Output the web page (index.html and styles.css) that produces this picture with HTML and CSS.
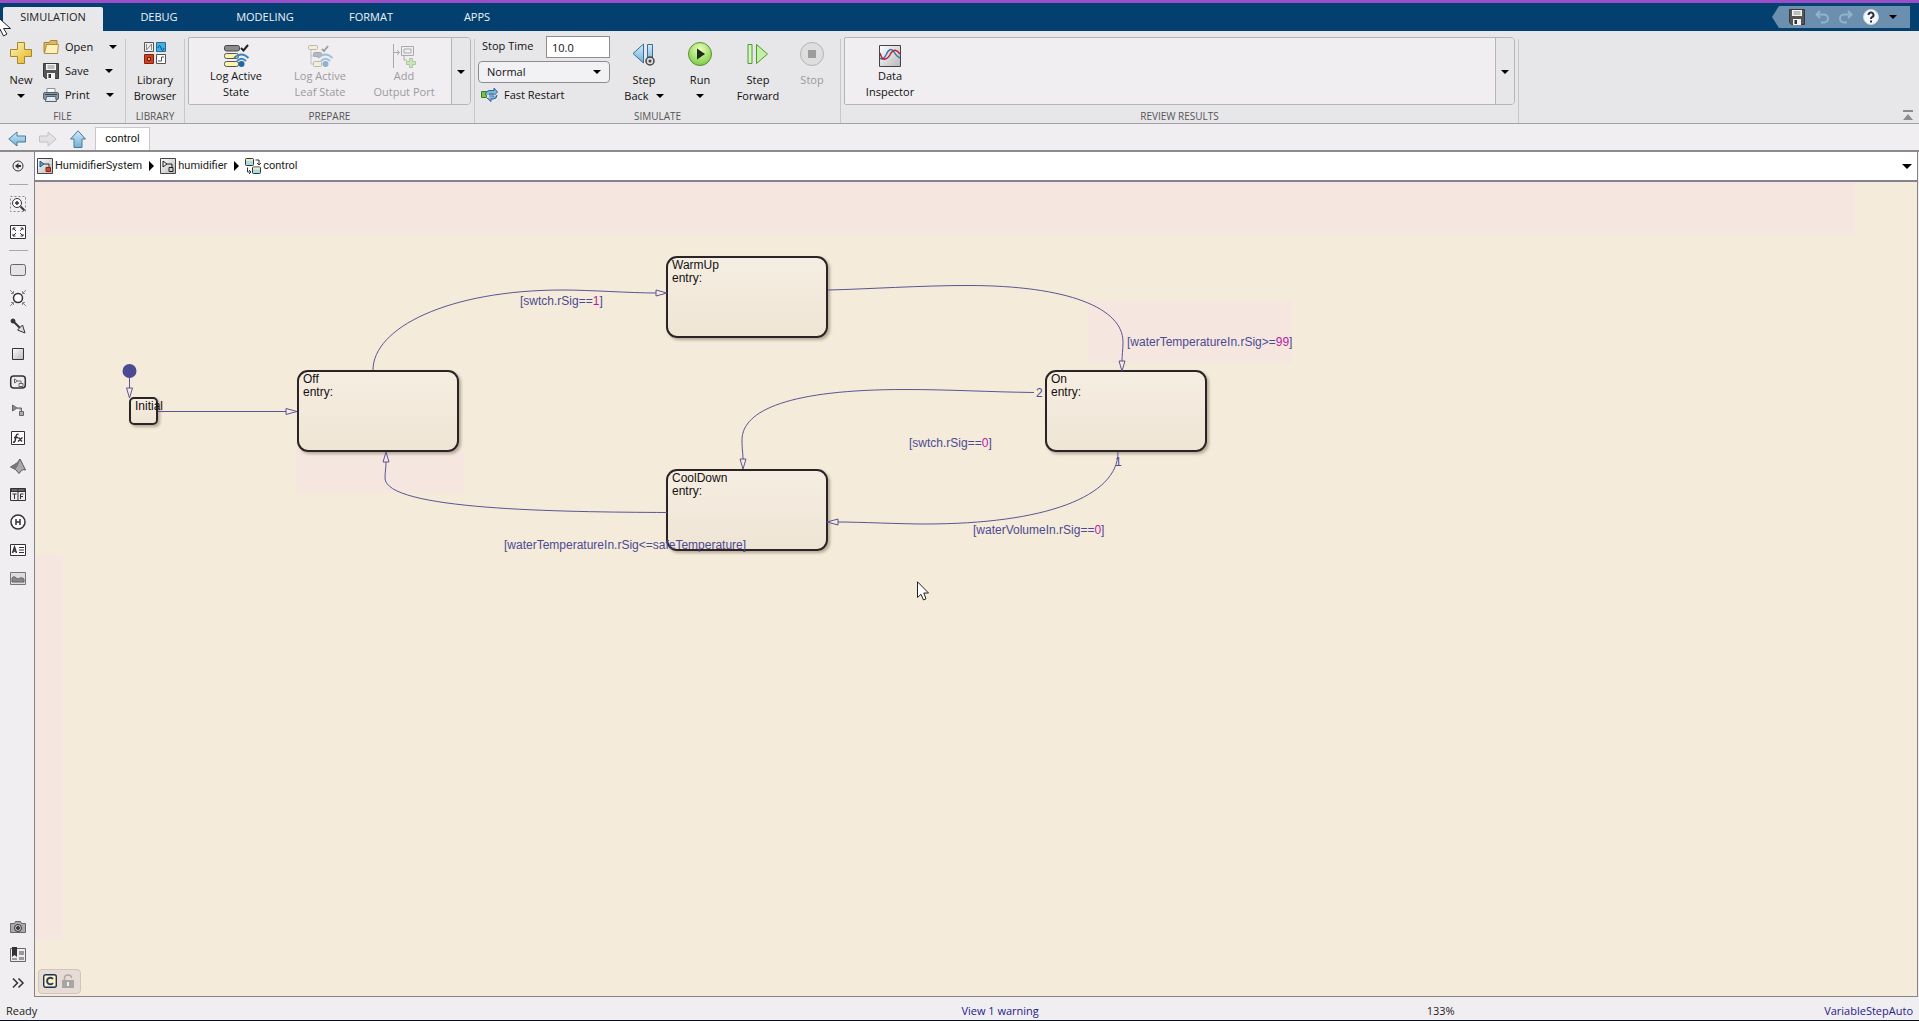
FILE: index.html
```html
<!DOCTYPE html>
<html lang="en">
<head>
<meta charset="utf-8">
<title>HumidifierSystem - control</title>
<link rel="stylesheet" href="styles.css">
</head>
<body>
<svg class="defs" aria-hidden="true">
  <defs>
    <linearGradient id="gold" x1="0" y1="0" x2="1" y2="1"><stop offset="0" stop-color="#fff7b8"/><stop offset="1" stop-color="#e0b21c"/></linearGradient>
    <linearGradient id="sky" x1="0" y1="0" x2="0" y2="1"><stop offset="0" stop-color="#d2ecfb"/><stop offset="1" stop-color="#6faed6"/></linearGradient>
    <linearGradient id="grey" x1="0" y1="0" x2="1" y2="1"><stop offset="0" stop-color="#fff"/><stop offset="1" stop-color="#b9b9b9"/></linearGradient>
    <radialGradient id="green" cx=".5" cy=".3" r=".8"><stop offset="0" stop-color="#eaffc0"/><stop offset="1" stop-color="#6cc531"/></radialGradient>
    <symbol id="floppy" viewBox="0 0 16 16"><path d="M.5.5h15v15H2.500l-2-2z" fill="#555" stroke="#3a3a3a"/><path d="M3 1h10v6H3z" fill="#f4f4f4"/><path d="M4.500 3h7M4.500 5h7" stroke="#888"/><path d="M4 10h8v6H4z" fill="#f4f4f4"/><path d="M5.500 11H8v4H5.500z" fill="#333"/></symbol>
  </defs>
</svg>

<header class="titlebar">
  <nav class="tabs">
    <button class="tab tab-active">SIMULATION</button>
    <button class="tab">DEBUG</button>
    <button class="tab">MODELING</button>
    <button class="tab">FORMAT</button>
    <button class="tab">APPS</button>
  </nav>
  <div class="quick">
    <button aria-label="Save"><svg width="16" height="16"><use href="#floppy"/></svg></button>
    <button aria-label="Undo"><svg width="14" height="14" fill="none" stroke="#93b3cb" stroke-width="2"><path d="M5 1 1.500 4.500 5 8M2 4.500h7a4 4 0 0 1 0 8H6"/></svg></button>
    <button aria-label="Redo"><svg width="14" height="14" fill="none" stroke="#93b3cb" stroke-width="2"><path d="m9 1 3.500 3.500L9 8m3-3.500H5a4 4 0 0 0 0 8h3"/></svg></button>
    <button aria-label="Help"><svg width="16" height="16"><circle cx="8" cy="8" r="7.500" fill="#f6f8fb" stroke="#cfd6e0"/><path d="M5.500 6a2.500 2.500 0 1 1 3.500 2.200q-1 .5-1 1.800" fill="none" stroke="#26304a" stroke-width="2"/><path d="M7 11.500h2v2H7z" fill="#26304a"/></svg></button>
    <button aria-label="More"><span class="caret"></span></button>
  </div>
</header>

<section class="ribbon">
  <div class="group group-file">
    <div class="group-body">
      <button class="big">
        <svg width="22" height="22"><path d="M7.500.5h7v7h7v7h-7v7h-7v-7h-7v-7h7z" fill="url(#gold)" stroke="#a8842a"/></svg>
        <span>New</span><span class="line"><i class="caret"></i></span>
      </button>
      <div class="rows">
        <button class="row">
          <svg width="16" height="14"><path d="M1 12.500V2.500h5l1.500-2H14v12z" fill="#e0b95c" stroke="#a8843a"/><path d="M3.500 4.500h12l-1 9h-13z" fill="#fff0b8" stroke="#b08f45"/></svg>
          <span>Open</span><i class="caret"></i>
        </button>
        <button class="row"><svg width="16" height="16"><use href="#floppy"/></svg><span>Save</span><i class="caret"></i></button>
        <button class="row">
          <svg width="16" height="14"><path d="M4 .5h8V5H4z" fill="#fff" stroke="#8894a5"/><rect x=".5" y="4.500" width="15" height="7" rx="1.500" fill="#8a96a3" stroke="#56606c"/><path d="M2 6.500h12" stroke="#3c4652"/><path d="M3.500 8.500h9l1 5h-11z" fill="#dcebf8" stroke="#56606c"/></svg>
          <span>Print</span><i class="caret"></i>
        </button>
      </div>
    </div>
    <h2>FILE</h2>
  </div>

  <div class="group group-library">
    <div class="group-body">
      <button class="big">
        <svg width="22" height="22" fill="none"><path d="M.5.500h9v9h-9z" fill="#eee" stroke="#555"/><path d="M2.500 2v6l5-6v6" stroke="#888"/><path d="M12.500.5h9v9h-9z" fill="#45aee0" stroke="#1b6f9c"/><path d="M14 6q1.500-5 3 0t3 0" stroke="#0d4d73"/><path d="M.5 12.500h9v9h-9z" fill="#cf4020" stroke="#86230f"/><path d="M3.500 15.500h3v3h-3z" fill="#f0a08a" stroke="#6c1a08"/><path d="M12.500 12.500h9v9h-9z" fill="#fff" stroke="#555"/><path d="M14 19h3.500v-4H20" stroke="#555"/></svg>
        <span>Library</span><span>Browser</span>
      </button>
    </div>
    <h2>LIBRARY</h2>
  </div>

  <div class="group group-prepare">
    <div class="group-body">
      <div class="gallery">
        <button class="item">
          <svg width="25" height="24"><rect x=".5" y="1.500" width="15" height="5.500" rx="2" fill="#8b8b8b" stroke="#444"/><rect x=".5" y="9.500" width="14" height="5" rx="2" fill="#fcf2ae" stroke="#555"/><rect x=".5" y="17.500" width="14" height="5" rx="2" fill="#fcf2ae" stroke="#555"/><path d="m17 4 2.500 2.500L24 1" fill="none" stroke="#222" stroke-width="2"/><path d="M10 14q7.500-7 14.500 0M13 17q4.500-4.500 9 0" fill="none" stroke="#3f86bd" stroke-width="2"/><circle cx="17.500" cy="20" r="3" fill="#1c67a8"/></svg>
          <span>Log Active</span><span>State</span>
        </button>
        <button class="item" disabled>
          <svg width="25" height="24"><path d="M3 5v15M3 12h3M3 20h3" stroke="#888"/><rect x=".5" y="1.500" width="9" height="4" rx="1" fill="#fcf2ae" stroke="#777"/><rect x="5.500" y="8.500" width="8" height="4" rx="1" fill="#777" stroke="#555"/><rect x="5.500" y="17.500" width="8" height="5" rx="1" fill="#fcf2ae" stroke="#777"/><path d="m14 5 2 2 4-5" fill="none" stroke="#444" stroke-width="2"/><path d="M10 14q7.500-7 14.500 0M13 17q4.500-4.500 9 0" fill="none" stroke="#3f86bd" stroke-width="2"/><circle cx="17.500" cy="20" r="3" fill="#1c67a8"/></svg>
          <span>Log Active</span><span>Leaf State</span>
        </button>
        <button class="item" disabled>
          <svg width="24" height="24" fill="none" stroke="#555"><path d="M1.500 0v24M1 8.500h6M5 6l2.500 2.500L5 11M9.500 2.500h12v9h-12zM12 5h7v4h-7zM12 11v5h3"/><path d="M17.500 14.500h3v3h3v3h-3v3h-3v-3h-3v-3h3z" fill="#a6dd86" stroke="#4f9c35"/></svg>
          <span>Add</span><span>Output Port</span>
        </button>
        <button class="gallery-more" aria-label="Show more"><i class="caret"></i></button>
      </div>
    </div>
    <h2>PREPARE</h2>
  </div>

  <div class="group group-simulate">
    <div class="group-body">
      <div class="sim-form">
        <div class="stop-time"><label for="stop">Stop Time</label><input id="stop" type="text" value="10.0"></div>
        <div class="select"><select aria-label="Simulation mode"><option>Normal</option></select></div>
        <button class="row">
          <svg width="17" height="14"><path d="M.5 3.500h5v6h-5z" fill="#7cc04f" stroke="#3d7a22"/><path d="M4.500 7a4.500 4 0 0 1 4.500-4.500h4V0l3.500 4-3 3M16 7a4 4 0 0 1-4 4h-2v2.500L6 10" fill="#7fb4dc" stroke="#2f618c"/><path d="M8 6h5M8 8h5" stroke="#2f618c"/></svg>
          <span>Fast Restart</span>
        </button>
      </div>
      <button class="big big-60">
        <svg width="24" height="24"><path d="M11.500 2v19L1 11.500z" fill="url(#sky)" stroke="#3d6d94"/><path d="M15.500 2.500h5v18h-5z" fill="url(#sky)" stroke="#3d6d94"/><circle cx="18" cy="19" r="4" fill="#ddd" stroke="#444" stroke-width="1.500"/><circle cx="18" cy="19" r="1.500" fill="#444"/></svg>
        <span>Step</span><span class="line">Back <i class="caret"></i></span>
      </button>
      <button class="big big-52">
        <svg width="24" height="24"><circle cx="12" cy="12" r="11.500" fill="url(#green)" stroke="#5b8f3a"/><path d="M9 6.500v11l8-5.500z" fill="#1e2a18"/></svg>
        <span>Run</span><span class="line"><i class="caret"></i></span>
      </button>
      <button class="big big-64">
        <svg width="22" height="24"><path d="M1 2.500h4v19H1z" fill="#d5f5be" stroke="#4d9a35"/><path d="M9.500 2.500v19l11-9.500z" fill="#c3efa6" stroke="#4d9a35"/></svg>
        <span>Step</span><span>Forward</span>
      </button>
      <button class="big big-44" disabled>
        <svg width="24" height="24"><circle cx="12" cy="12" r="11.500" fill="#d6d6d6" stroke="#777"/><path d="M8 8h8v8H8z" fill="#444"/></svg>
        <span>Stop</span>
      </button>
    </div>
    <h2>SIMULATE</h2>
  </div>

  <div class="group group-review">
    <div class="group-body">
      <div class="gallery">
        <button class="item">
          <svg width="22" height="22" viewBox="0 0 22 22" fill="none"><path d="M.5.5h21v21H.5z" fill="url(#grey)" stroke="#444"/><path d="M1 13q3 3 6-3 4-9 8-3 2 4 6 6" stroke="#3b78ad" stroke-width="1.500"/><path d="M1 8q2 7 5 6 3 0 6-6 4-6 9 1" stroke="#b5243a" stroke-width="1.500"/></svg>
          <span>Data</span><span>Inspector</span>
        </button>
        <button class="gallery-more" aria-label="Show more"><i class="caret"></i></button>
      </div>
    </div>
    <h2>REVIEW RESULTS</h2>
  </div>
  <button class="collapse" aria-label="Collapse toolstrip"><svg width="10" height="10" fill="#8c8c8c"><path d="M0 0h10v2H0zM5 4l5 6H0z"/></svg></button>
</section>

<nav class="docbar">
  <button aria-label="Back"><svg width="18" height="16"><path d="M.8 8 9 1v4h8.500v6H9v4z" fill="url(#sky)" stroke="#4d7896"/></svg></button>
  <button aria-label="Forward"><svg width="18" height="16"><path d="M17.200 8 9 1v4H.5v6H9v4z" fill="#e2e2e2" stroke="#c2c2c2"/></svg></button>
  <button aria-label="Up"><svg width="16" height="18"><path d="M8 .8 15.500 9H12v8.500H4V9H.5z" fill="url(#sky)" stroke="#4d7896"/></svg></button>
  <button class="doctab">control</button>
</nav>

<main class="work">
  <aside class="palette">
    <button aria-label="Hide browser"><svg viewBox="0 0 16 16"><circle cx="8" cy="8" r="5"/><path d="M11 8H6" stroke-width="2"/><path d="M8.500 5v6L5 8z" fill="#333" stroke="none"/></svg></button>
    <hr>
    <button aria-label="Zoom"><svg viewBox="0 0 16 16"><path d="M.5.500h15v15H.5z" stroke="#888" stroke-dasharray="2 2"/><circle cx="7" cy="7" r="4.500" fill="#fff"/><path d="M7 5v4M5 7h4" stroke-width="1.500"/><path d="m10.500 10.500 4 4" stroke-width="2"/></svg></button>
    <button aria-label="Fit to view"><svg viewBox="0 0 16 16"><path d="M.5 1.500h15v13H.5z" fill="#fff"/><path d="M3 6V4h2.500M3 4l3 3M13 6V4h-2.500M13 4l-3 3M3 10v2h2.500M3 12l3-3M13 10v2h-2.500M13 12l-3-3"/></svg></button>
    <hr>
    <button aria-label="State"><svg viewBox="0 0 16 16"><rect x=".5" y="2.500" width="15" height="11" rx="2" fill="#e4e4e4" stroke="#666"/></svg></button>
    <button aria-label="Junction"><svg viewBox="0 0 16 16"><circle cx="8" cy="8" r="4.500" fill="#fff" stroke-width="1.500"/><path d="M0 0l3.500 3.500M3.500 1v2.500H1M16 0l-3.500 3.500M12.500 1v2.500H15M0 16l3.500-3.500M1 12.500h2.500V15M16 16l-3.500-3.500M15 12.500h-2.500V15" stroke="#888"/></svg></button>
    <button aria-label="Default transition"><svg viewBox="0 0 16 16"><circle cx="3" cy="3" r="2" fill="#333"/><path d="m3 3 7 7" stroke-width="2"/><path d="m7.500 12 5-5 2.500 8z" fill="#ddd"/></svg></button>
    <button aria-label="Box"><svg viewBox="0 0 16 16"><path d="M2.500 2.500h11v11h-11z" fill="url(#grey)"/></svg></button>
    <button aria-label="Simulink state"><svg viewBox="0 0 16 16"><rect x=".7" y="2" width="14.600" height="12" rx="3" fill="#eee" stroke-width="1.500"/><path d="M4.500 5v4l3-2zM7.500 7H11v2M9 9.500h4v3H9z" stroke="#666"/></svg></button>
    <button aria-label="Simulink function"><svg viewBox="0 0 16 16"><path d="M2.500 3v6L7 6z" fill="#888" stroke="#666"/><path d="M7 6h4.500v3M9.500 9.500h4v4h-4z" fill="#aaa" stroke="#666"/></svg></button>
    <button aria-label="Graphical function"><svg viewBox="0 0 16 16"><path d="M1.500 1.500h13v13h-13z" fill="#fff"/><path d="M8.500 4.500q-2-1-2.500 2L5 11q-.5 1.500-2 1M4 7.500h4M8.500 7.500l3.500 4M12.500 7.500l-4.500 4" stroke-width="1.500"/></svg></button>
    <button aria-label="MATLAB function"><svg viewBox="0 0 16 16"><path d="m.5 9 4-2.500q3-1 5.500-5.500 2.500 5 5.500 11-2.500-1-4 .500L9 15.500Q6.500 11 .5 9z" fill="#aaa" stroke="#555"/><path d="M10 1.500Q8 9 5 11.500L.5 9l4-2.500q3-1 5.500-5z" fill="#777" stroke="none"/></svg></button>
    <button aria-label="Truth table"><svg viewBox="0 0 16 16"><path d="M.5 2.500h15v12H.5z" fill="#eee"/><path d="M1 3h14v2H1z" fill="#999"/><path d="M.5 5.500h15M8 3v11M2.500 8h4M4.500 8v5M10.500 13V8h3M10.500 10.500H13"/></svg></button>
    <button aria-label="History junction"><svg viewBox="0 0 16 16"><circle cx="8" cy="8" r="7" fill="#fff" stroke-width="1.500"/><path d="M6 5v6M10 5v6M6 8h4" stroke-width="1.500"/></svg></button>
    <button aria-label="Annotation"><svg viewBox="0 0 16 16"><path d="M.5 2.500h15v11H.5z" fill="#fff"/><path d="m2.500 11 2-6 2 6M3 9h3" stroke-width="1.500"/><path d="M9 5.500h5M9 8h5M9 10.500h5"/></svg></button>
    <button aria-label="Image"><svg viewBox="0 0 16 16"><path d="M.5 2.500h15v12H.5z" fill="#ddd" stroke="#777"/><path d="M2 12V8q2-3 4 0 2 2 4 0 2-1 4 1v3z" fill="#888" stroke="#666"/></svg></button>
    <span class="spring"></span>
    <button aria-label="Screenshot"><svg viewBox="0 0 16 16"><path d="M.5 4.500h4l1-2h5l1 2h4v9H.5z" fill="#aaa" stroke="#666"/><circle cx="8" cy="9" r="3.500" fill="#ccc"/><circle cx="8" cy="9" r="1.500" fill="#444"/></svg></button>
    <button aria-label="Model browser"><svg viewBox="0 0 16 16"><path d="M.5 1.500h15v13H.5z" fill="#eee" stroke="#666"/><path d="M9 4h5v4H9zM9 10h5v3H9zM2 11h5v2H2z" fill="#999" stroke="none"/><path d="M2 0h5v10L4.500 8 2 10z" fill="#333" stroke="none"/></svg></button>
    <button aria-label="More"><svg viewBox="0 0 16 16"><path d="m3 3.500 4.500 4.500L3 12.500M8.500 3.500 13 8l-4.500 4.500" stroke-width="1.500"/></svg></button>
  </aside>

  <div class="editor">
    <div class="crumbs">
      <a href="#"><svg width="16" height="16"><path d="M.5.5h15v15H.5z" fill="url(#grey)" stroke="#444"/><path d="M3 3v6l4-3z" fill="#4ba3d6" stroke="#1c5d86"/><path d="M7 6h5v3" fill="none" stroke="#333"/><path d="M9 9.500h4.500v4H9z" fill="#d8452b" stroke="#8a2412"/></svg>HumidifierSystem</a>
      <i class="next"></i>
      <a href="#"><svg width="16" height="16" fill="none" stroke="#222"><path d="M.5.5h15v15H.5z" fill="url(#grey)" stroke="#444"/><path d="M3 3v6l4-3zM7 6h5v3M9 9.500h4v4H9z"/></svg>humidifier</a>
      <i class="next"></i>
      <a href="#"><svg width="16" height="16" fill="none" stroke="#333"><rect x=".5" y=".5" width="8" height="7" rx="1" fill="#a8dcea"/><path d="M1 1h7v2H1z" fill="#f7ecb0" stroke="none"/><rect x="7.500" y="9" width="8" height="6.500" rx="1" fill="#a8dcea"/><path d="M8 9.500h7v2H8z" fill="#f7ecb0" stroke="none"/><path d="M10.500 2H14v5M12 5l2 2 2-2M2.500 9.500V14h3M4 12l2 2-2 2"/></svg>control</a>
      <button class="crumb-more" aria-label="Show path"><i class="caret caret-wide"></i></button>
    </div>

    <div class="canvas">
      <div class="state small" style="left:94px;top:215px"><p>Initial</p></div>
      <div class="state" style="left:262px;top:188px"><p>Off</p><p>entry:</p></div>
      <div class="state" style="left:631px;top:74px"><p>WarmUp</p><p>entry:</p></div>
      <div class="state" style="left:631px;top:287px"><p>CoolDown</p><p>entry:</p></div>
      <div class="state" style="left:1010px;top:188px"><p>On</p><p>entry:</p></div>

      <svg class="links" aria-hidden="true">
        <g transform="translate(-35 -182)">
          <circle cx="129.500" cy="371" r="7" fill="#4b4b93"/>
          <path d="M129.500 378v10m-3 0h6l-3 10z"/>
          <path d="M158 411.500h128m0-3v6l11-3z"/>
          <path d="M373 370C373 328 448 290 563 290 590 290 630 293 656 293m0-3v6l11-3z"/>
          <path d="M828 290C870 289 920 285.500 968 285.500 1068 285.500 1123 308 1123 342 1123 350 1122 355 1122 361m-3 0h6l-3 10z"/>
          <path d="M1034 392.500C990 392 950 389.500 905 389.500 790 389.500 742 410 742 440 742 450 743 453 743 459m-3 0h6l-3 10z"/>
          <path d="M1118 452C1118 497 1044 524 925 524 900 524 860 522 838 522m0-3v6l-11-3z"/>
          <path d="M667 512.500C560 512 385 510 385 478 385 472 386 468 386 462m-3 0h6l-3-10z"/>
        </g>
      </svg>

      <span class="cond" style="left:485px;top:113px">[swtch.rSig==<b>1</b>]</span>
      <span class="cond" style="left:1092px;top:154px">[waterTemperatureIn.rSig&gt;=<b>99</b>]</span>
      <span class="cond" style="left:874px;top:255px">[swtch.rSig==<b>0</b>]</span>
      <span class="cond" style="left:938px;top:342px">[waterVolumeIn.rSig==<b>0</b>]</span>
      <span class="cond" style="left:469px;top:357px">[waterTemperatureIn.rSig&lt;=safeTemperature]</span>
      <span class="cond" style="left:1001px;top:205px">2</span>
      <span class="cond" style="left:1080px;top:274px">1</span>

      <div class="badge">
        <svg width="14" height="14"><rect x=".7" y=".7" width="12.600" height="12.600" rx="2" fill="#fdf5bd" stroke="#1f3155" stroke-width="1.400"/><path d="M10 5a3.300 3.300 0 1 0 0 4" fill="none" stroke="#2a3e6e" stroke-width="2"/></svg>
        <svg width="12" height="14"><path d="M2.500 6V4a3.500 3 0 0 1 7 0" fill="none" stroke="#aaa" stroke-width="1.500"/><path d="M0 6h12v8H0z" fill="#a9a5a3"/><path d="M5 8h2v4H5z" fill="#eee"/></svg>
      </div>
      <svg class="pointer pointer-canvas" width="12" height="20" viewBox="0 0 12 20" aria-hidden="true"><path d="M.5.800v15.700l3.500-3.200L6.500 19l2.500-1.200L6.800 12h4.700z" fill="#fff" stroke="#222"/></svg>
    </div>
  </div>
</main>

<footer class="status">
  <span>Ready</span>
  <a href="#">View 1 warning</a>
  <span>133%</span>
  <a href="#">VariableStepAuto</a>
</footer>
<svg class="pointer pointer-page" width="12" height="22" viewBox="0 0 12 22" aria-hidden="true"><path d="M-4.500-1v17L0 13l3.500 7L7 18l-3.500-5.500H10.500z" fill="#fff" stroke="#222"/></svg>
</body>
</html>
```
FILE: styles.css
```css
* { box-sizing: border-box; }

body {
  margin: 0;
  min-height: 100vh;
  display: flex;
  flex-direction: column;
  background: #f0eef1;
  border-top: 3px solid #9a4fc8;
  border-bottom: 1px solid #0a0f1c;
  color: #111;
  font: 12px/16px "Open Sans", "Noto Sans", sans-serif;
}

button {
  margin: 0;
  padding: 0;
  border: 0;
  background: none;
  color: inherit;
  font: inherit;
}

a { color: inherit; text-decoration: none; }
svg { display: block; flex: none; overflow: visible; }
.defs { position: absolute; width: 0; height: 0; }

.caret {
  display: inline-block;
  border: 4px solid transparent;
  border-top-color: #000;
  border-bottom: 0;
}
.caret-wide { border-width: 5px 5px 0; }

/* Title bar */
.titlebar {
  display: flex;
  justify-content: space-between;
  align-items: flex-end;
  height: 28px;
  background: #04406f;
}
.tabs { display: flex; gap: 6px; padding-left: 3px; }
.tab {
  width: 100px;
  height: 24px;
  padding-bottom: 4px;
  color: #eef3f8;
  font-size: 11px;
}
.tab-active { background: #e8e7e9; color: #222; border-radius: 2px 2px 0 0; }
.quick {
  display: flex;
  align-items: center;
  gap: 10px;
  height: 22px;
  margin: 0 9px 3px 0;
  padding: 0 13px 0 17px;
  background: #6b8fae;
  clip-path: polygon(0 50%, 7px 0, 100% 0, 100% 100%, 7px 100%);
}
.quick button { display: flex; }

/* Ribbon */
.ribbon {
  display: flex;
  height: 93px;
  background: #e7e6e8;
  border-bottom: 1px solid #a2a0a3;
}
.group {
  display: flex;
  flex-direction: column;
  padding-right: 1px;
  background: linear-gradient(#c8c6c9, #c8c6c9) right bottom / 1px calc(100% - 8px) no-repeat;
}
.group-file { width: 126px; }
.group-library { width: 59px; }
.group-prepare { width: 290px; }
.group-simulate { width: 366px; }
.group-review { width: 678px; }
.group-body { display: flex; flex: 1; align-items: flex-start; }
.group h2 {
  margin: 0;
  height: 15px;
  line-height: 17px;
  color: #555;
  font-size: 10px;
  font-weight: 400;
  text-align: center;
}
.big, .item, .row { font-size: 11px; }
.big {
  display: flex;
  flex-direction: column;
  align-items: center;
  padding-top: 11px;
  white-space: nowrap;
}
.big svg { height: 24px; margin-bottom: 6px; }
.big-60 { width: 60px; }
.big-52 { width: 52px; }
.big-64 { width: 64px; }
.big-44 { width: 44px; }
.line { display: flex; align-items: center; gap: 7px; height: 16px; }
.group-file .big { width: 42px; }
.group-library .big { width: 58px; }
.rows { display: flex; flex-direction: column; padding: 4px 0 0 1px; }
.row { display: flex; align-items: center; height: 24px; gap: 6px; }
.row .caret { margin-left: 10px; }
button:disabled { color: #9c9a9d; }
button:disabled svg { opacity: .45; }

.gallery {
  display: flex;
  flex: 1;
  height: 68px;
  margin: 6px 3px 0;
  padding-left: 5px;
  background: #f0eef1;
  border: 1px solid #b6b4b7;
  border-radius: 2px 4px 4px 2px;
}
.item {
  display: flex;
  flex-direction: column;
  align-items: center;
  width: 84px;
  padding-top: 6px;
}
.item svg { height: 24px; }
.gallery-more {
  width: 19px;
  margin-left: auto;
  background: #e7e6e8;
  border-left: 1px solid #b6b4b7;
  border-radius: 0 3px 3px 0;
}
.gallery-more .caret { vertical-align: middle; }
.group-review .gallery { padding-left: 3px; }

.sim-form { width: 135px; padding: 5px 0 0 3px; margin-right: 4px; font-size: 11px; }
.stop-time { display: flex; justify-content: space-between; padding-left: 4px; line-height: 20px; }
.stop-time input {
  width: 64px;
  height: 22px;
  padding: 0 5px;
  border: 1px solid #8e8c8f;
  background: #fff;
  color: #111;
  font: inherit;
}
.select { position: relative; margin-top: 3px; }
.select::after {
  content: "";
  position: absolute;
  right: 9px;
  top: 9px;
  border: 4px solid transparent;
  border-top-color: #000;
  border-bottom: 0;
}
.select select {
  appearance: none;
  display: block;
  width: 100%;
  height: 22px;
  padding: 0 8px;
  border: 1px solid #8e8c8f;
  border-radius: 4px;
  background: #f2f1f3;
  color: #111;
  font: inherit;
}
.sim-form .row { padding-left: 3px; }
.collapse { margin: auto 6px 3px auto; }

/* Document bar */
.docbar {
  display: flex;
  align-items: center;
  height: 28px;
  padding: 3px 0 0 8px;
  border-bottom: 2px solid #8b8b8d;
}
.docbar button { margin-right: 13px; }
.docbar .doctab {
  align-self: stretch;
  width: 55px;
  margin-left: -4px;
  background: #fff;
  border: 1px solid #c9c7ca;
  border-bottom: 0;
  font: 11px/16px Roboto, sans-serif;
}

/* Work area */
.work { display: flex; flex: 1; }
.palette {
  display: flex;
  flex-direction: column;
  width: 34px;
  padding-left: 2px;
}
.palette button { display: grid; place-items: center; height: 28px; }
.palette svg { width: 16px; height: 16px; fill: none; stroke: #333; }
.palette hr { width: 19px; margin: 4px auto 5px; border: 0; border-top: 1px solid #a9a7aa; }
.spring { flex: 1; }

.editor {
  display: flex;
  flex: 1;
  flex-direction: column;
  margin-right: 1px;
  border: 1px solid #848385;
  border-top: 0;
}
.crumbs {
  display: flex;
  align-items: center;
  height: 30px;
  padding: 0 5px 0 2px;
  background: #fff;
  border-bottom: 2px solid #84828f;
  color: #222;
  font: 11px/16px Roboto, sans-serif;
}
.crumbs a { display: flex; align-items: center; gap: 2px; }
.next {
  margin: 0 6px 0 7px;
  border: 5px solid transparent;
  border-left-color: #000;
  border-right: 0;
}
.crumb-more { margin-left: auto; }

/* Chart canvas */
.canvas {
  position: relative;
  flex: 1;
  overflow: hidden;
  font: 12px/13px "Liberation Sans", Arial, sans-serif;
  background:
    linear-gradient(#f5e7df, #f5e7df) 0 0 / 1820px 53px no-repeat,
    linear-gradient(#f5e7df, #f5e7df) 0 373px / 28px 385px no-repeat,
    linear-gradient(#f5e7df, #f5e7df) 261px 268px / 168px 43px no-repeat,
    linear-gradient(#f5e7df, #f5e7df) 1053px 118px / 204px 63px no-repeat,
    #f4ebda;
}
.state {
  position: absolute;
  width: 162px;
  height: 82px;
  padding: 1px 4px;
  border: 2px solid #2a2426;
  border-radius: 11px;
  background: linear-gradient(#f6ede2, #efe5d5);
  box-shadow: 2px 2px 3px rgba(90, 70, 50, .4);
}
.state p { margin: 0; white-space: nowrap; }
.small { width: 29px; height: 28px; border-radius: 5px; }
.links { position: absolute; inset: 0; width: 100%; height: 100%; fill: none; stroke: #5a5595; }
.links circle { stroke: none; }
.cond { position: absolute; color: #4c4a93; white-space: nowrap; }
.cond b { color: #b8209f; font-weight: 400; }
.badge {
  position: absolute;
  left: 3px;
  bottom: 2px;
  display: flex;
  gap: 5px;
  padding: 4px 6px 5px 4px;
  background: #e6dcd5;
  border: 1px solid #cfc5be;
  border-radius: 4px;
}
.pointer { position: absolute; }
.pointer-canvas { left: 882px; top: 399px; }
.pointer-page { left: 0; top: 16px; overflow: hidden; }

/* Status bar */
.status {
  display: grid;
  grid-template-columns: 50fr 24fr 25fr auto;
  grid-template-columns: 50.100% 24.400% 1fr auto;
  align-items: center;
  height: 23px;
  padding: 4px 6px 0 6px;
  color: #222;
  font-size: 11px;
}
.status a { color: #26208c; }
```
